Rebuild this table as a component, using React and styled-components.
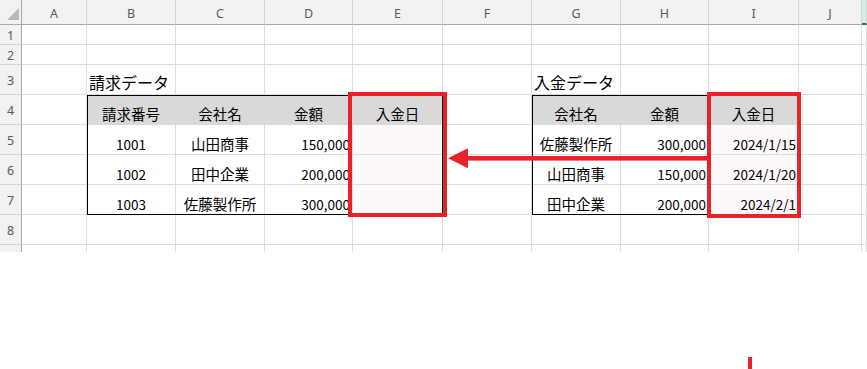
import React from "react";
import styled, { createGlobalStyle } from "styled-components";

const GlobalStyle = createGlobalStyle`
	html, body {
		margin: 0;
		padding: 0;
		background: #fff;
		overflow: hidden;
	}
	body {
		font-family: "Noto Sans CJK JP", "Noto Sans", sans-serif;
		color: #000;
	}
`;

const COLS = ["A", "B", "C", "D", "E", "F", "G", "H", "I", "J", ""];
const ROWS = [1, 2, 3, 4, 5, 6, 7, 8, 9];
// 9行目は下端で切れていて番号は見えない
const VISIBLE_ROWS = 8;

// セルの中身 (アドレス -> 表示内容)
const head = (t) => ({ t, align: "center", fill: "#d9d9d9" });
const num = (t, align = "right", tint) => ({ t, align, num: true, tint });
const txt = (t) => ({ t, align: "center" });
const PINK = "#fdf9fb";

const DATA = {
	B3: { t: "請求データ", title: true },
	G3: { t: "入金データ", title: true },

	B4: head("請求番号"),
	C4: head("会社名"),
	D4: head("金額"),
	E4: head("入金日"),
	B5: num("1001", "center"),
	C5: txt("山田商事"),
	D5: num("150,000"),
	E5: { tint: PINK },
	B6: num("1002", "center"),
	C6: txt("田中企業"),
	D6: num("200,000"),
	E6: { tint: PINK },
	B7: num("1003", "center"),
	C7: txt("佐藤製作所"),
	D7: num("300,000"),
	E7: { tint: PINK },

	G4: head("会社名"),
	H4: head("金額"),
	I4: head("入金日"),
	G5: txt("佐藤製作所"),
	H5: num("300,000"),
	I5: num("2024/1/15", "right", PINK),
	G6: txt("山田商事"),
	H6: num("150,000"),
	I6: num("2024/1/20", "right", PINK),
	G7: txt("田中企業"),
	H7: num("200,000"),
	I7: num("2024/2/1", "right", PINK),
};

const Sheet = styled.div`
	display: grid;
	grid-template-columns: 22px 65px 89px 89px 88px 90px 89px 89px 88px 90px 63px 1fr;
	grid-template-rows: 25px 20px 20px 30px 30px 30px 30px 30px 30px 30px;
	height: 252px;
	overflow: hidden;
`;

// 位置はグリッド線の番号で指定する
const placed = (p) => `
	grid-column: ${p.$col};
	grid-row: ${p.$row};
`;

const Corner = styled.div`
	grid-column: 1;
	grid-row: 1;
	background: #f2f2f2;
	border-right: 1px solid #a9a9a9;
	border-bottom: 1px solid #a9a9a9;
	display: flex;
	align-items: flex-end;
	justify-content: flex-end;
	padding: 0 2px 4px 0;
	box-sizing: border-box;
`;

const ColHead = styled.div`
	${placed}
	background: ${(p) => (p.$active ? "#d3efdf" : "#f2f2f2")};
	border-right: 1px solid #d4d4d4;
	border-bottom: ${(p) => (p.$active ? "2px solid #217346" : "1px solid #a9a9a9")};
	box-sizing: border-box;
	display: flex;
	justify-content: center;
	align-items: center;
	padding-top: 3px;
	font-family: "Noto Sans", "Liberation Sans", sans-serif;
	font-size: 12.5px;
	color: #5a5a5a;
`;

const RowHead = styled.div`
	${placed}
	background: #f2f2f2;
	border-right: 1px solid #a9a9a9;
	border-bottom: 1px solid #d4d4d4;
	box-sizing: border-box;
	display: flex;
	justify-content: center;
	align-items: center;
	padding-top: 2px;
	font-family: "Noto Sans", "Liberation Sans", sans-serif;
	font-size: 12.5px;
	color: #5a5a5a;
`;

const justify = { left: "flex-start", center: "center", right: "flex-end" };

const Cell = styled.div`
	${placed}
	display: flex;
	align-items: flex-end;
	justify-content: ${(p) => justify[p.$align || "left"]};
	box-sizing: border-box;
	padding: 0 2px 0 2px;
	min-width: 0;
	white-space: nowrap;
	background: ${(p) => p.$fill || p.$tint || "#fff"};
	border-right: 1px solid ${(p) => p.$fill || "#dcdcdc"};
	border-bottom: 1px solid ${(p) => p.$fill || "#dcdcdc"};
	font-size: ${(p) => (p.$title ? "16px" : p.$num ? "13.5px" : "14.5px")};
	color: #000;
`;

// 表の外枠 (セル範囲に重ねる)
const TableFrame = styled.div`
	grid-column: ${(p) => p.$cols};
	grid-row: 5 / 9;
	border: 1px solid #000;
	pointer-events: none;
`;

// 強調用の赤枠
const RedBox = styled.div`
	grid-column: ${(p) => p.$cols};
	grid-row: 5 / 9;
	margin: ${(p) => p.$margin};
	border: 4px solid #e52328;
	pointer-events: none;
`;

const Arrow = styled.svg`
	grid-column: 7 / 10;
	grid-row: 6 / 8;
	width: 100%;
	height: 60px;
	pointer-events: none;
`;

const Below = styled.div`
	height: 117px;
	padding: 105px 0 0 748px;
	box-sizing: border-box;
`;

const Mark = styled.div`
	width: 4px;
	height: 12px;
	background: #e52328;
`;

export default function App() {
	return (
		<>
			<GlobalStyle />
			<Sheet>
				<Corner>
					<svg width="12" height="12" viewBox="0 0 12 12">
						<polygon points="12,0 12,12 0,12" fill="#b9b9b9" />
					</svg>
				</Corner>
				{COLS.map((c, i) => (
					<ColHead key={"h" + i} $col={i + 2} $row={1} $active={c === ""}>
						{c}
					</ColHead>
				))}

				{ROWS.map((r) => (
					<React.Fragment key={r}>
						<RowHead $col={1} $row={r + 1}>
							{r <= VISIBLE_ROWS ? r : null}
						</RowHead>
						{COLS.map((c, i) => {
							const d = (c && DATA[c + r]) || {};
							return (
								<Cell
									key={"c" + i}
									$col={i + 2}
									$row={r + 1}
									$align={d.align}
									$fill={d.fill}
									$tint={d.tint}
									$num={d.num}
									$title={d.title}
								>
									{d.t}
								</Cell>
							);
						})}
					</React.Fragment>
				))}

				<TableFrame $cols="3 / 7" />
				<TableFrame $cols="8 / 11" />
				<RedBox $cols="6 / 7" $margin="-3px -4px -2px -5px" />
				<RedBox $cols="10 / 11" $margin="-3px -2px -3px -2px" />

				<Arrow viewBox="0 0 266 60" preserveAspectRatio="none">
					<rect x="23" y="31" width="243" height="4.6" fill="#e52328" />
					<polygon points="5,33.3 25,23.3 25,43.3" fill="#e52328" />
				</Arrow>
			</Sheet>
			<Below>
				<Mark />
			</Below>
		</>
	);
}
